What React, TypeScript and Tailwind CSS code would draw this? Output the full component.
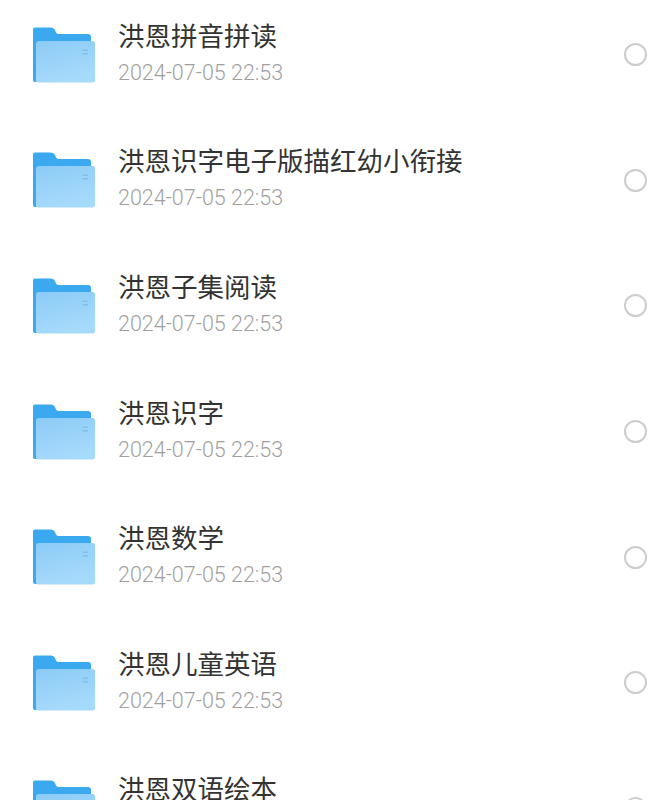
import React from 'react';

const folders = [
  '洪恩拼音拼读',
  '洪恩识字电子版描红幼小衔接',
  '洪恩子集阅读',
  '洪恩识字',
  '洪恩数学',
  '洪恩儿童英语',
  '洪恩双语绘本',
];

function FolderIcon() {
  return (
    <svg width="64" height="58" viewBox="0 0 64 58" className="shrink-0">
      <defs>
        <linearGradient id="front" x1="0" y1="0" x2="0.35" y2="1">
          <stop offset="0" stopColor="#8ccbf7" />
          <stop offset="1" stopColor="#a6dafb" />
        </linearGradient>
      </defs>
      {/* back */}
      <path d="M3 1.500 H19 Q22 1.500 23 4 L24 6.500 Q25 8 27 8 H56 Q59 8 59 11 V20 H59 V54 Q59 56 57 56 H3 Q1 56 1 54 V3.500 Q1 1.500 3 1.500 Z" fill="#3aa9ef" />
      {/* front */}
      <path d="M7 15 H60.500 Q63 15 63 17.500 V54 Q63 56.500 60.500 56.500 H6 Q4 56.500 4 54.500 V18 Q4 15 7 15 Z" fill="url(#front)" />
      <rect x="50.500" y="23.500" width="5.500" height="1.500" fill="#7fc0ec" />
      <rect x="50.500" y="27" width="5.500" height="1.500" fill="#7fc0ec" />
    </svg>
  );
}

function FolderRow({ name }: { name: string }) {
  return (
    <div className="flex h-[125.6px] shrink-0 items-center pl-[32px] pr-[22px]">
      <FolderIcon />
      <div className="ml-[22px] min-w-0 flex-1 pb-[6px]">
        <div className="text-[26.5px] leading-[36px] text-[#333333]">{name}</div>
        <div
          className="mt-[6px] text-[21.5px] font-light leading-[28px] text-[#9f9f9f]"
          style={{ fontFamily: 'Roboto, sans-serif' }}
        >
          2024-07-05 22:53
        </div>
      </div>
      <div className="h-[23px] w-[23px] shrink-0 rounded-full border-2 border-[#cdcdcd]" />
    </div>
  );
}

export default function App() {
  return (
    <div
      className="h-[800px] w-[669px] overflow-hidden bg-white"
      style={{ fontFamily: '"Noto Sans CJK SC", sans-serif' }}
    >
      <div className="-mt-[8px] flex flex-col">
        {folders.map((name) => (
          <FolderRow key={name} name={name} />
        ))}
      </div>
    </div>
  );
}
